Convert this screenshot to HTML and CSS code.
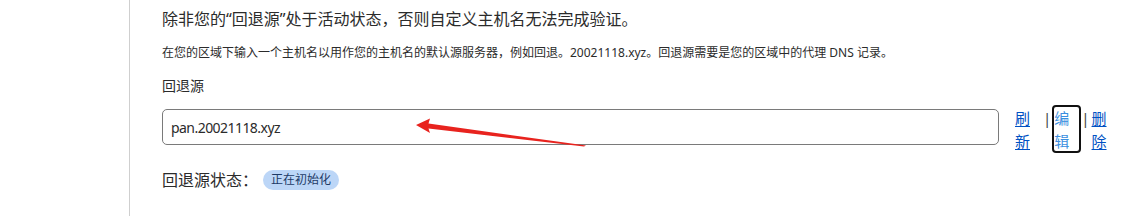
FILE: index.html
```html
<!DOCTYPE html>
<html lang="zh-CN">
<head>
<meta charset="utf-8">
<title>回退源</title>
<link rel="stylesheet" href="styles.css">
</head>
<body>
<div class="page">
  <div class="side"></div>
  <div class="main">
    <p class="lead">除非您的“回退源”处于活动状态，否则自定义主机名无法完成验证。</p>
    <p class="hint">在您的区域下输入一个主机名以用作您的主机名的默认源服务器，例如回退。20021118.xyz。回退源需要是您的区域中的代理 DNS 记录。</p>
    <label class="label" for="fb">回退源</label>
    <div class="row">
      <input id="fb" class="field" type="text" value="pan.20021118.xyz">
      <div class="actions">
        <a class="act" href="#">刷新</a>
        <span class="sep sep1">|</span>
        <a class="act focus" href="#">编辑</a>
        <span class="sep sep2">|</span>
        <a class="act" href="#">删除</a>
      </div>
    </div>
    <div class="status">
      <span class="status-label">回退源状态：</span>
      <span class="badge">正在初始化</span>
    </div>
  </div>
  <svg class="arrow" width="1133" height="216" viewBox="0 0 1133 216">
    <polygon points="416,125 430,118.5 428.5,123.5 586,145.5 584,146.5 428.5,128.5 430,133" fill="#e8231e"/>
  </svg>
</div>
</body>
</html>
```

FILE: styles.css
```css
html, body {
  margin: 0;
  padding: 0;
  background: #ffffff;
}
body {
  font-family: "Noto Sans", "Noto Sans CJK SC", sans-serif;
  color: #2b2b2b;
}
.page {
  position: relative;
  display: flex;
  width: 1133px;
  height: 216px;
  overflow: hidden;
}
.side {
  width: 129px;
  flex: none;
  border-right: 1px solid #cfcfcf;
}
.main {
  flex: 1;
  padding: 7px 0 0 32px;
  display: flex;
  flex-direction: column;
  align-items: flex-start;
}
.lead {
  margin: 0;
  font-size: 16px;
  line-height: 24px;
  color: #2b2b2b;
}
.hint {
  margin: 13px 0 0;
  font-size: 12px;
  line-height: 18px;
  color: #2b2b2b;
}
.label {
  margin-top: 14px;
  font-size: 14px;
  line-height: 20px;
  color: #2b2b2b;
}
.row {
  margin-top: 9px;
  display: flex;
  align-items: flex-start;
}
.field {
  margin-top: 4px;
  box-sizing: border-box;
  width: 837px;
  height: 36px;
  border: 1px solid #7a7a7a;
  border-radius: 5px;
  padding: 0 8px;
  font-family: "Noto Sans", "Noto Sans CJK SC", sans-serif;
  font-size: 14px;
  letter-spacing: -0.55px;
  color: #2b2b2b;
  background: #fff;
  outline: none;
}
.actions {
  margin-left: 16px;
  display: flex;
  align-items: flex-start;
}
.act {
  display: block;
  width: 16px;
  font-size: 15px;
  line-height: 23px;
  color: #0051c3;
  text-decoration: underline;
  text-underline-offset: 2px;
  word-break: break-all;
  padding: 2px 0;
}
.act.focus {
  padding: 0 9px 0 0;
  width: 16px;
  height: 44px;
  border: 2px solid #111;
  border-radius: 4px;
  color: #3b8fe0;
  text-decoration: none;
}
.sep {
  display: block;
  font-size: 15px;
  line-height: 23px;
  padding: 2px 0;
  color: #444;
}
.sep1 {
  margin: 0 1px 0 12px;
}
.sep2 {
  margin: 0 2px 0 0;
}
.status {
  margin-top: 13px;
  display: flex;
  align-items: center;
}
.status-label {
  font-size: 16px;
  line-height: 24px;
  color: #2b2b2b;
}
.badge {
  margin-left: 5px;
  height: 20px;
  padding: 0 8px;
  border-radius: 10px;
  background: #bcd6f7;
  color: #1d3a66;
  font-size: 12px;
  line-height: 20px;
}
.arrow {
  position: absolute;
  left: 0;
  top: 0;
  pointer-events: none;
}
```
